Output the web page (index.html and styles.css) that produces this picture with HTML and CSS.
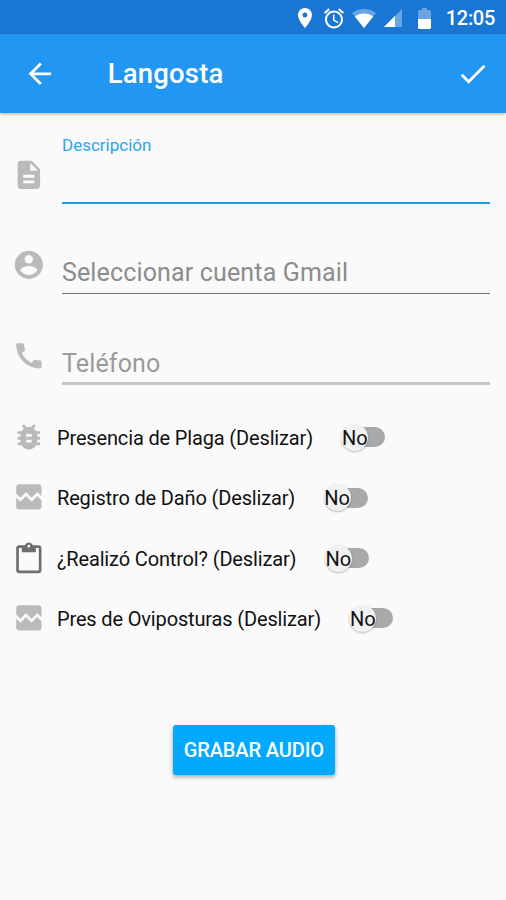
FILE: index.html
```html
<!DOCTYPE html>
<html lang="es">
<head>
  <meta charset="UTF-8" />
  <meta name="viewport" content="width=device-width, initial-scale=1.0"/>
  <title>Langosta</title>
  <link rel="stylesheet" href="styles.css">
</head>
<body>
<div class="status-bar">
  <svg class="st-pin" viewBox="5 2 14 20"><path d="M12 2C8.1 2 5 5.1 5 9c0 5.3 7 13 7 13s7-7.700 7-13c0-3.900-3.100-7-7-7zm0 9.500a2.500 2.500 0 1 1 0-5 2.500 2.500 0 0 1 0 5z"/></svg>
  <svg class="st-alarm" viewBox="2 2 20 20"><path d="M22 5.720l-4.600-3.860-1.290 1.530 4.600 3.860L22 5.720zM7.880 3.390L6.600 1.860 2 5.710l1.290 1.530 4.590-3.850zM12.500 8H11v6l4.750 2.850.75-1.230-4-2.370V8zM12 4c-4.970 0-9 4.030-9 9s4.020 9 9 9a9 9 0 0 0 0-18zm0 16a7 7 0 1 1 0-14 7 7 0 0 1 0 14z"/></svg>
  <svg class="st-wifi" viewBox="0 0 24 19"><path class="faded" d="M12 19L0 4C3.500 1.300 7.500 0 12 0s8.500 1.300 12 4z"/><path d="M12 19L2.800 7.500C5.500 5.500 8.600 4.500 12 4.500s6.500 1 9.200 3z"/></svg>
  <svg class="st-signal" viewBox="0 0 18 18"><path class="faded" d="M0 18L18 0v18z"/><path d="M0 18L11 7v11z"/></svg>
  <svg class="st-battery" viewBox="0 0 13 21"><path class="faded" d="M1 2h3V0h5v2h3l1 1v8H0V3z"/><path d="M0 11h13v9l-1 1H1l-1-1z"/></svg>
  <span class="clock">12:05</span>
</div>

<header class="toolbar">
  <svg class="icon back" viewBox="0 0 24 24"><path d="M20 11H7.830l5.590-5.590L12 4l-8 8 8 8 1.410-1.410L7.830 13H20v-2z"/></svg>
  <h1>Langosta</h1>
  <svg class="icon done" viewBox="0 0 24 24"><path d="M9 16.170L4.830 12l-1.420 1.410L9 19 21 7l-1.410-1.410z"/></svg>
</header>

<main class="form">
  <div class="field focused">
    <svg class="icon" viewBox="0 0 24 24"><path d="M14 2H6c-1.100 0-2 .9-2 2v16c0 1.100.9 2 2 2h12c1.100 0 2-.9 2-2V8l-6-6zm2 16H8v-2h8v2zm0-4H8v-2h8v2zm-3-5V3.500L18.500 9H13z"/></svg>
    <div class="input"><label>Descripción</label></div>
  </div>
  <div class="field account">
    <svg class="icon" viewBox="0 0 24 24"><path d="M12 2a10 10 0 1 0 0 20 10 10 0 0 0 0-20zm0 3a3 3 0 1 1 0 6 3 3 0 0 1 0-6zm0 14.200c-2.500 0-4.710-1.280-6-3.220.03-1.990 4-3.080 6-3.080 1.990 0 5.970 1.090 6 3.080-1.290 1.940-3.500 3.220-6 3.220z"/></svg>
    <div class="input"><span>Seleccionar cuenta Gmail</span></div>
  </div>
  <div class="field phone">
    <svg class="icon" viewBox="0 0 24 24"><path d="M20.010 15.380c-1.230 0-2.420-.2-3.530-.56-.35-.12-.74-.03-1.010.24l-1.570 1.970c-2.830-1.350-5.480-3.900-6.890-6.830l1.950-1.660c.27-.28.35-.67.24-1.020-.37-1.110-.56-2.300-.56-3.530 0-.54-.45-.99-.99-.99H4.190C3.650 3 3 3.240 3 3.990 3 13.280 10.730 21 20.010 21c.71 0 .99-.63.99-1.180v-3.450c0-.54-.45-.99-.99-.99z"/></svg>
    <div class="input"><span>Teléfono</span></div>
  </div>

  <div class="switches">
    <div class="switch-row">
      <svg class="icon" viewBox="0 0 24 24"><path d="M20 8h-2.810c-.45-.78-1.070-1.450-1.820-1.960L17 4.410 15.590 3l-2.170 2.170C12.960 5.060 12.490 5 12 5s-.96.060-1.410.17L8.410 3 7 4.410l1.620 1.630C7.880 6.550 7.260 7.220 6.810 8H4v2h2.090c-.05.33-.09.66-.09 1v1H4v2h2v1c0 .34.040.67.090 1H4v2h2.810c1.040 1.790 2.970 3 5.190 3s4.150-1.210 5.190-3H20v-2h-2.090c.05-.33.09-.66.09-1v-1h2v-2h-2v-1c0-.34-.04-.67-.09-1H20V8zm-6 8h-4v-2h4v2zm0-4h-4v-2h4v2z"/></svg>
      <span class="text">Presencia de Plaga (Deslizar)</span>
      <span class="switch"><span class="thumb">No</span></span>
    </div>
    <div class="switch-row">
      <svg class="icon" viewBox="0 0 24 24"><path d="M21 5v6.590l-3-3.010-4 4.010-4-4-4 4-3-3.010V5c0-1.100.9-2 2-2h14c1.100 0 2 .9 2 2zm-3 6.420l3 3.010V19c0 1.100-.9 2-2 2H5c-1.100 0-2-.9-2-2v-6.580l3 2.990 4-4 4 4 4-3.990z"/></svg>
      <span class="text">Registro de Daño (Deslizar)</span>
      <span class="switch"><span class="thumb">No</span></span>
    </div>
    <div class="switch-row">
      <svg class="icon dark" viewBox="0 0 24 24"><path d="M19 3h-4.180C14.400 1.840 13.300 1 12 1s-2.400.84-2.820 2H5c-1.100 0-2 .9-2 2v16c0 1.100.9 2 2 2h14c1.100 0 2-.9 2-2V5c0-1.100-.9-2-2-2zm-7-.3a1 1 0 1 1 0 2 1 1 0 0 1 0-2zM19.100 21.100H4.900V4.900H7V8h10V4.900h2.100v16.200z"/></svg>
      <span class="text">¿Realizó Control? (Deslizar)</span>
      <span class="switch"><span class="thumb">No</span></span>
    </div>
    <div class="switch-row">
      <svg class="icon" viewBox="0 0 24 24"><path d="M21 5v6.590l-3-3.010-4 4.010-4-4-4 4-3-3.010V5c0-1.100.9-2 2-2h14c1.100 0 2 .9 2 2zm-3 6.420l3 3.010V19c0 1.100-.9 2-2 2H5c-1.100 0-2-.9-2-2v-6.580l3 2.990 4-4 4 4 4-3.990z"/></svg>
      <span class="text">Pres de Oviposturas (Deslizar)</span>
      <span class="switch"><span class="thumb">No</span></span>
    </div>
  </div>

  <button class="record">GRABAR AUDIO</button>
</main>
</body>
</html>
```
FILE: styles.css
```css
:root {
  --status: #1976d2;
  --primary: #2196f3;
  --accent: #03a9ff;
  --bg: #fafafa;
  --icon: #bababa;
}

* {
  box-sizing: border-box;
}

body {
  margin: 0;
  height: 900px;
  overflow: hidden;
  background: var(--bg);
  font-family: Roboto, sans-serif;
  color: #111;
}

svg {
  display: block;
  flex: none;
}

.status-bar {
  display: flex;
  align-items: center;
  height: 34px;
  padding: 2px 11px 0 298px;
  background: var(--status);
  fill: #fff;
  color: #fff;
}

.faded {
  opacity: 0.35;
}

.st-pin {
  width: 14px;
  height: 20px;
}

.st-alarm {
  width: 20px;
  height: 21px;
  margin-left: 12px;
}

.st-wifi {
  width: 24px;
  height: 19px;
  margin-left: 8px;
}

.st-signal {
  width: 18px;
  height: 18px;
  margin-left: 8px;
}

.st-battery {
  width: 13px;
  height: 21px;
  margin-left: 16px;
}

.clock {
  margin-left: auto;
  font-size: 20px;
  font-weight: 500;
  letter-spacing: -0.3px;
}

.toolbar {
  display: flex;
  align-items: center;
  height: 79px;
  padding: 0 16px 0 23px;
  background: var(--primary);
  fill: #fff;
  color: #fff;
  box-shadow: 0 1px 3px rgba(0, 0, 0, 0.3);
}

.toolbar h1 {
  flex: 1;
  margin: 0 0 0 51px;
  font-size: 27.5px;
  font-weight: 500;
  letter-spacing: 0.2px;
}

.icon {
  width: 33.7px;
  height: 33.7px;
}

.form {
  display: flex;
  flex-direction: column;
  padding: 22px 16px 0 11.7px;
  fill: var(--icon);
}

.field {
  display: flex;
  height: 69px;
}

.field .icon {
  margin-top: 23px;
}

.input {
  flex: 1;
  display: flex;
  align-items: flex-end;
  margin-left: 16.6px;
  padding-bottom: 4px;
  border-bottom: 1px solid #757575;
  color: #8c8c8c;
  font-size: 25px;
  line-height: 32px;
  letter-spacing: 0.15px;
}

.focused .input {
  align-items: flex-start;
  border-bottom: 2px solid #1e9cec;
}

.focused label {
  color: #2ba5f3;
  font-size: 17px;
  line-height: 20px;
  letter-spacing: 0;
}

.account {
  height: 51px;
  margin-top: 39px;
}

.account .icon,
.phone .icon {
  margin-top: 5px;
}

.phone {
  height: 51px;
  margin-top: 40px;
}

.phone .input {
  border-bottom: 3px solid #c6c6c6;
  padding-bottom: 2px;
  color: #9a9a9a;
}

.switches {
  margin-top: 22.6px;
}

.switch-row {
  display: flex;
  align-items: center;
  height: 60.4px;
}

.switch-row .icon {
  margin-bottom: 2px;
}

.text {
  margin-left: 11.6px;
  font-size: 20px;
  letter-spacing: -0.15px;
  white-space: nowrap;
}

.dark {
  fill: #6e6e6e;
}

.switch {
  display: flex;
  align-items: center;
  width: 40px;
  height: 20px;
  margin: 0 0 1px 32.4px;
  border-radius: 10px;
  background: #a9a9a9;
}

.thumb {
  flex: none;
  width: 27px;
  height: 27px;
  margin-left: -4px;
  border-radius: 50%;
  background: #f1f1f1;
  box-shadow: 0 1px 2px rgba(0, 0, 0, 0.25);
  font-size: 20px;
  line-height: 28px;
  text-align: center;
}

.record {
  align-self: center;
  width: 162px;
  height: 50px;
  margin: 75.4px 0 0 6px;
  padding: 1px 0 0;
  border: none;
  border-radius: 3px;
  background: var(--accent);
  color: #fff;
  font: 500 20px Roboto, sans-serif;
  letter-spacing: -0.1px;
  box-shadow: 0 2px 4px rgba(0, 0, 0, 0.35);
}
```
